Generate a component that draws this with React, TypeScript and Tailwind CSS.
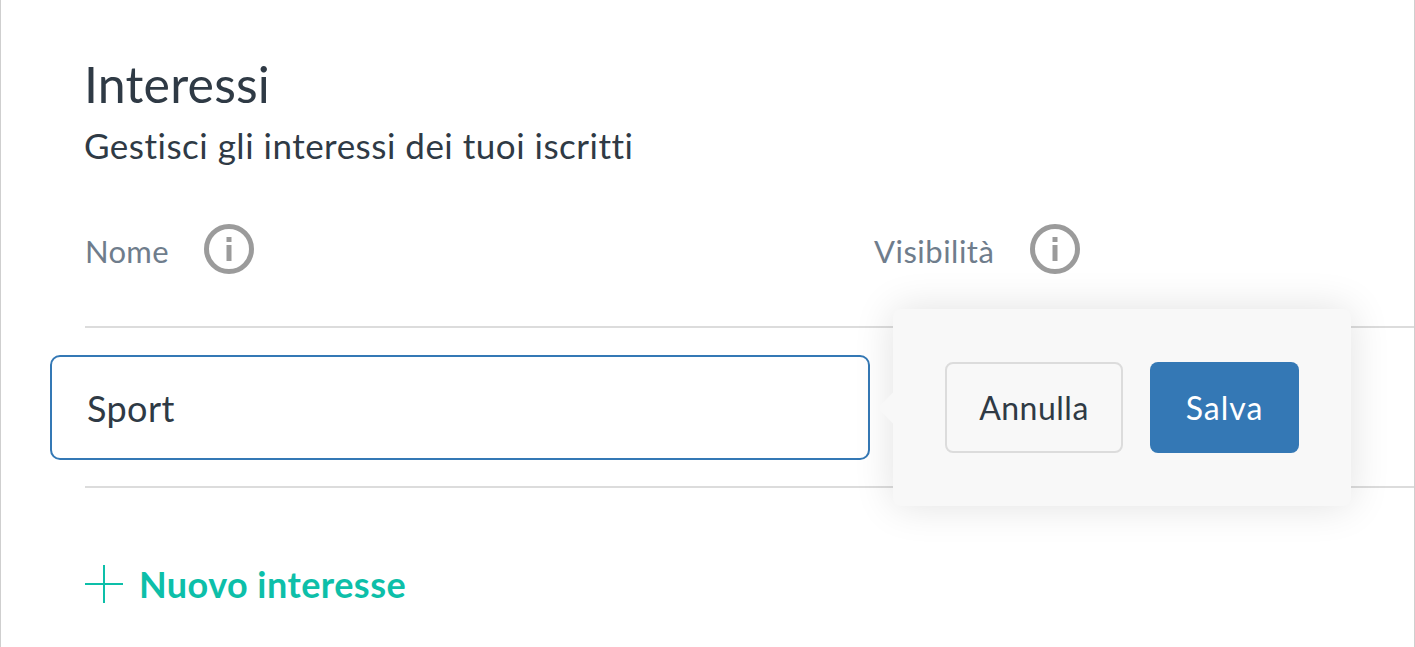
function InfoIcon() {
  return (
    <svg width="50" height="50" viewBox="0 0 50 50" fill="none" className="-mt-[4px]">
      <circle cx="25" cy="25" r="22.5" stroke="#9b9b9b" strokeWidth="5" />
      <rect x="22.5" y="13" width="5" height="5" fill="#9b9b9b" />
      <rect x="22.5" y="21" width="5" height="16" fill="#9b9b9b" />
    </svg>
  );
}

function PlusIcon() {
  return (
    <svg width="38" height="38" viewBox="0 0 38 38" fill="none" className="shrink-0">
      <path d="M19 0V38M0 19H38" stroke="#0dbfa9" strokeWidth="2" />
    </svg>
  );
}

export default function App() {
  return (
    <div className="h-[647px] overflow-hidden border-x border-[#cfcfcf] bg-white pl-[84px] font-['Lato',sans-serif] text-[#2f3a45] [font-variant-ligatures:none]">
      <h1 className="-ml-px pt-[55px] text-[50px] leading-[58px] tracking-[0.2px]">Interessi</h1>
      <p className="-ml-px mt-[10px] text-[35px] leading-[44px] tracking-[0.5px]">Gestisci gli interessi dei tuoi iscritti</p>

      <div className="mt-[57px] flex h-[54px] items-center text-[31px] tracking-[0.3px] text-[#6f7d8c]">
        <div className="flex w-[789px] items-center gap-[35px]">
          <span>Nome</span>
          <InfoIcon />
        </div>
        <div className="flex items-center gap-[36px]">
          <span className="tracking-[0.5px]">Visibilità</span>
          <InfoIcon />
        </div>
      </div>

      <div className="relative mt-[48px] flex h-[162px] items-center border-y-2 border-[#dcdcdc]">
        <div className="-ml-[35px] mt-px flex h-[105px] w-[820px] items-center rounded-[10px] border-2 border-[#3478b5] bg-white pl-[35px] text-[36px] tracking-[0.4px]">
          Sport
        </div>
        <div className="absolute left-[808px] top-[-19px] flex h-[197px] w-[458px] items-center gap-[27px] rounded-lg bg-[#f8f8f8] pl-[52px] text-[32px] shadow-[0_0_40px_rgba(0,0,0,0.12)]">
          <div className="absolute -left-[11px] top-[88px] size-[22px] rotate-45 bg-[#f8f8f8]" />
          <div className="flex h-[91px] w-[178px] items-center justify-center rounded-lg border-2 border-[#dcdcdc] tracking-[0.5px]">Annulla</div>
          <div className="flex h-[91px] w-[149px] items-center justify-center rounded-lg bg-[#3478b5] tracking-[1px] text-white">Salva</div>
        </div>
      </div>

      <div className="mt-[69px] flex items-center gap-[16px] text-[36px] font-bold tracking-[0.45px] text-[#0dbfa9]">
        <PlusIcon />
        <span>Nuovo interesse</span>
      </div>
    </div>
  );
}
